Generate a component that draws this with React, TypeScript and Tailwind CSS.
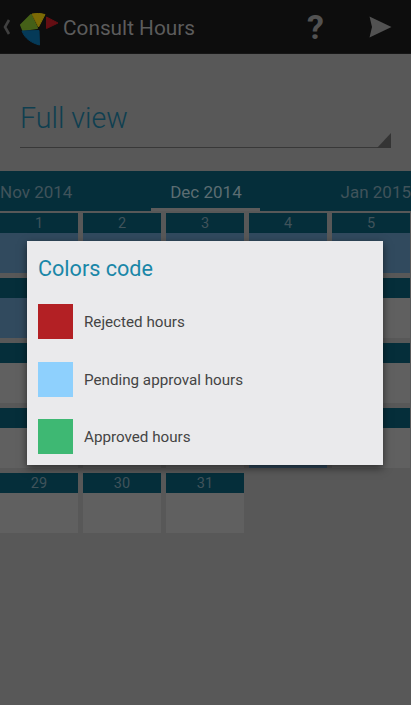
const font = { fontFamily: "Roboto, sans-serif" };

const rows: (number | null)[][] = [
  [1, 2, 3, 4, 5],
  [8, 9, 10, 11, 12],
  [15, 16, 17, 18, 19],
  [22, 23, 24, 25, 26],
  [29, 30, 31, null, null],
];

const blue = new Set([1, 2, 3, 4, 5, 8, 25]);

function Logo() {
  return (
    <svg width="40" height="34" viewBox="0 0 40 34" className="shrink-0">
      <path d="M1 12 L11 2 L17 15 L3 17 Z" fill="#456018" stroke="#456018" strokeLinejoin="round" strokeWidth="2" />
      <path d="M12 1 Q19 -0.5 25 1.5 L18.5 14 Z" fill="#7c6a05" stroke="#7c6a05" strokeLinejoin="round" strokeWidth="1" />
      <path d="M26.5 4 L38 10 L26.5 15.5 Z" fill="#640e13" stroke="#640e13" strokeLinejoin="round" strokeWidth="1" />
      <path d="M2 18 L19 17.5 L19.5 32 C12 30 5 26 2 18 Z" fill="#053a58" stroke="#053a58" strokeLinejoin="round" strokeWidth="1" />
    </svg>
  );
}

function Header() {
  return (
    <div className="flex h-[54px] items-center bg-[#0d0d0d] border-b border-[#161616] pl-[3px]">
      <svg width="8" height="18" viewBox="0 0 8 18" className="shrink-0 mt-[1px]">
        <path d="M6 2 L2 9 L6 16" fill="none" stroke="#404040" strokeWidth="2.6" />
      </svg>
      <div className="ml-[9px] mt-[7px] flex"><Logo /></div>
      <span className="ml-[3px] mt-[4px] text-[20.8px] text-[#5c5c5c]">Consult Hours</span>
      <span className="ml-[112px] mt-[2px] w-[17px] text-center text-[34px] font-bold text-[#525252]">?</span>
      <svg width="23" height="22" viewBox="0 0 23 22" className="ml-[45px] shrink-0">
        <path d="M0.5 0.5 L22.5 11 L0.5 21.5 L3 11 Z" fill="#525252" />
      </svg>
    </div>
  );
}

function Dropdown() {
  return (
    <div className="relative h-[117px] px-[20px] pt-[45px]">
      <div className="h-[49px] border-b border-[#383838] text-[28.6px] leading-[38px] font-light text-[#0f3f50]">
        Full view
      </div>
      <svg width="14" height="15" viewBox="0 0 14 15" className="absolute left-[377px] top-[79px]">
        <path d="M14 0 V15 H0 Z" fill="#343434" />
      </svg>
    </div>
  );
}

function Tabs() {
  return (
    <div className="relative h-[40px] bg-[#052e3a] flex items-center justify-between text-[17px] pt-[4px] whitespace-nowrap">
      <span className="text-[#40535a]">Nov 2014</span>
      <span className="text-[#5c6d72] -ml-[1px]">Dec 2014</span>
      <span className="text-[#40535a]">Jan 2015</span>
      <div className="absolute left-[151px] bottom-0 h-[3.5px] w-[109px] bg-[#5c5c5c]" />
    </div>
  );
}

function Calendar() {
  return (
    <div className="mt-[2px] flex flex-col gap-[5px]">
      {rows.map((row, i) => (
        <div key={i} className="grid grid-cols-[78px_78px_78px_78px_78px] gap-[5px]">
          {row.map((d, j) =>
            d === null ? (
              <div key={j} />
            ) : (
              <div key={j} className="flex flex-col">
                <div className="flex h-[20px] items-center justify-center bg-[#052e3a] pt-[1px] text-[14.5px] text-[#40535a]">
                  {d}
                </div>
                <div className={`h-[40px] ${blue.has(d) ? "bg-[#314a5e]" : "bg-[#606060]"}`} />
              </div>
            ),
          )}
        </div>
      ))}
    </div>
  );
}

const legend = [
  { label: "Rejected hours", color: "bg-[#b32024]", mt: "mt-[20px]" },
  { label: "Pending approval hours", color: "bg-[#8ed0fd]", mt: "mt-[23px]" },
  { label: "Approved hours", color: "bg-[#3eb873]", mt: "mt-[22px]" },
];

function Dialog() {
  return (
    <div className="absolute left-[27px] top-[241px] h-[224px] w-[356px] bg-[#eaeaec] px-[11px] pt-[13px] shadow-[0_3px_8px_rgba(0,0,0,0.55)]">
      <div className="text-[21.6px] leading-[30px] text-[#1a87a8]">Colors code</div>
      {legend.map((l) => (
        <div key={l.label} className={`flex items-center gap-[11px] ${l.mt}`}>
          <div className={`h-[35px] w-[35px] ${l.color}`} />
          <span className="pt-[2px] text-[15.2px] text-[#444444]">{l.label}</span>
        </div>
      ))}
    </div>
  );
}

export default function App() {
  return (
    <div className="relative h-[705px] w-[411px] overflow-hidden bg-[#585858]" style={font}>
      <Header />
      <Dropdown />
      <Tabs />
      <Calendar />
      <Dialog />
    </div>
  );
}
